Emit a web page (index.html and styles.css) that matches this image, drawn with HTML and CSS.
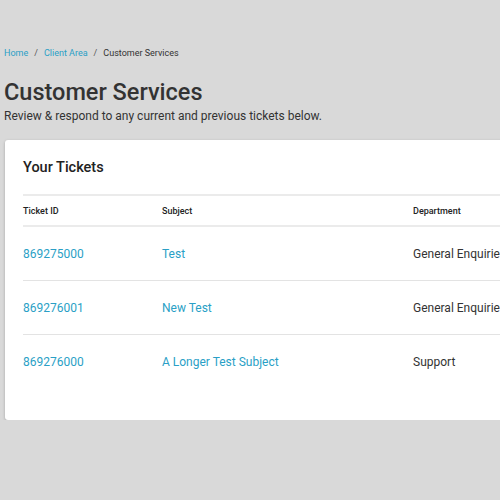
FILE: index.html
```html
<!DOCTYPE html>
<html>
<head>
<meta charset="utf-8">
<link rel="stylesheet" href="styles.css">
</head>
<body>
<div class="page">
  <nav class="crumbs">
    <a href="#">Home</a><span class="sep">/</span><a href="#">Client Area</a><span class="sep">/</span><span class="current">Customer Services</span>
  </nav>
  <h1 class="title">Customer Services</h1>
  <p class="lead">Review &amp; respond to any current and previous tickets below.</p>
  <section class="card">
    <h2 class="card-title">Your Tickets</h2>
    <table class="tickets">
      <thead>
        <tr><th class="c-id">Ticket ID</th><th class="c-subj">Subject</th><th class="c-dept">Department</th></tr>
      </thead>
      <tbody>
        <tr><td><a href="#">869275000</a></td><td><a href="#">Test</a></td><td>General Enquiries</td></tr>
        <tr><td><a href="#">869276001</a></td><td><a href="#">New Test</a></td><td>General Enquiries</td></tr>
        <tr><td><a href="#">869276000</a></td><td><a href="#">A Longer Test Subject</a></td><td>Support</td></tr>
      </tbody>
    </table>
  </section>
</div>
</body>
</html>
```
FILE: styles.css
```css
html, body {
  margin: 0;
  padding: 0;
  overflow: hidden;
  background: #d9d9d9;
  font-family: Roboto, "Liberation Sans", sans-serif;
  color: #333;
}
.page {
  padding: 47px 0 0 4px;
  width: 700px;
}
.crumbs {
  font-size: 9px;
  line-height: 13px;
  color: #333;
}
.crumbs a { color: #2a9fc6; text-decoration: none; }
.crumbs .sep { margin: 0 6px; color: #555; }
.title {
  margin: 18px 0 0;
  font-size: 23.5px;
  font-weight: 500;
  line-height: 28px;
  color: #333;
}
.lead {
  margin: 2px 0 0;
  font-size: 12px;
  line-height: 17px;
  color: #333;
}
.card {
  margin: 15px 0 0 1px;
  background: #fff;
  border-radius: 3px;
  box-shadow: 0 1px 3px rgba(0,0,0,0.25);
  padding: 18px 0 32px 18px;
}
.card-title {
  margin: 0;
  font-size: 14.5px;
  font-weight: 500;
  line-height: 20px;
  color: #222;
  padding-bottom: 16px;
  border-bottom: 2px solid #ebebeb;
}
.tickets {
  width: 100%;
  border-collapse: collapse;
}
.tickets th {
  text-align: left;
  font-size: 9px;
  font-weight: 500;
  color: #222;
  height: 29px;
  padding: 0;
  border-bottom: 2px solid #ebebeb;
}
.tickets td {
  padding: 0;
  height: 53px;
  font-size: 12px;
  color: #333;
  border-bottom: 1px solid #e3e3e3;
}
.tickets tbody tr:last-child td { border-bottom: none; }
.tickets a { color: #2a9fc6; text-decoration: none; }
.c-id { width: 139px; }
.c-subj { width: 251px; }
```
